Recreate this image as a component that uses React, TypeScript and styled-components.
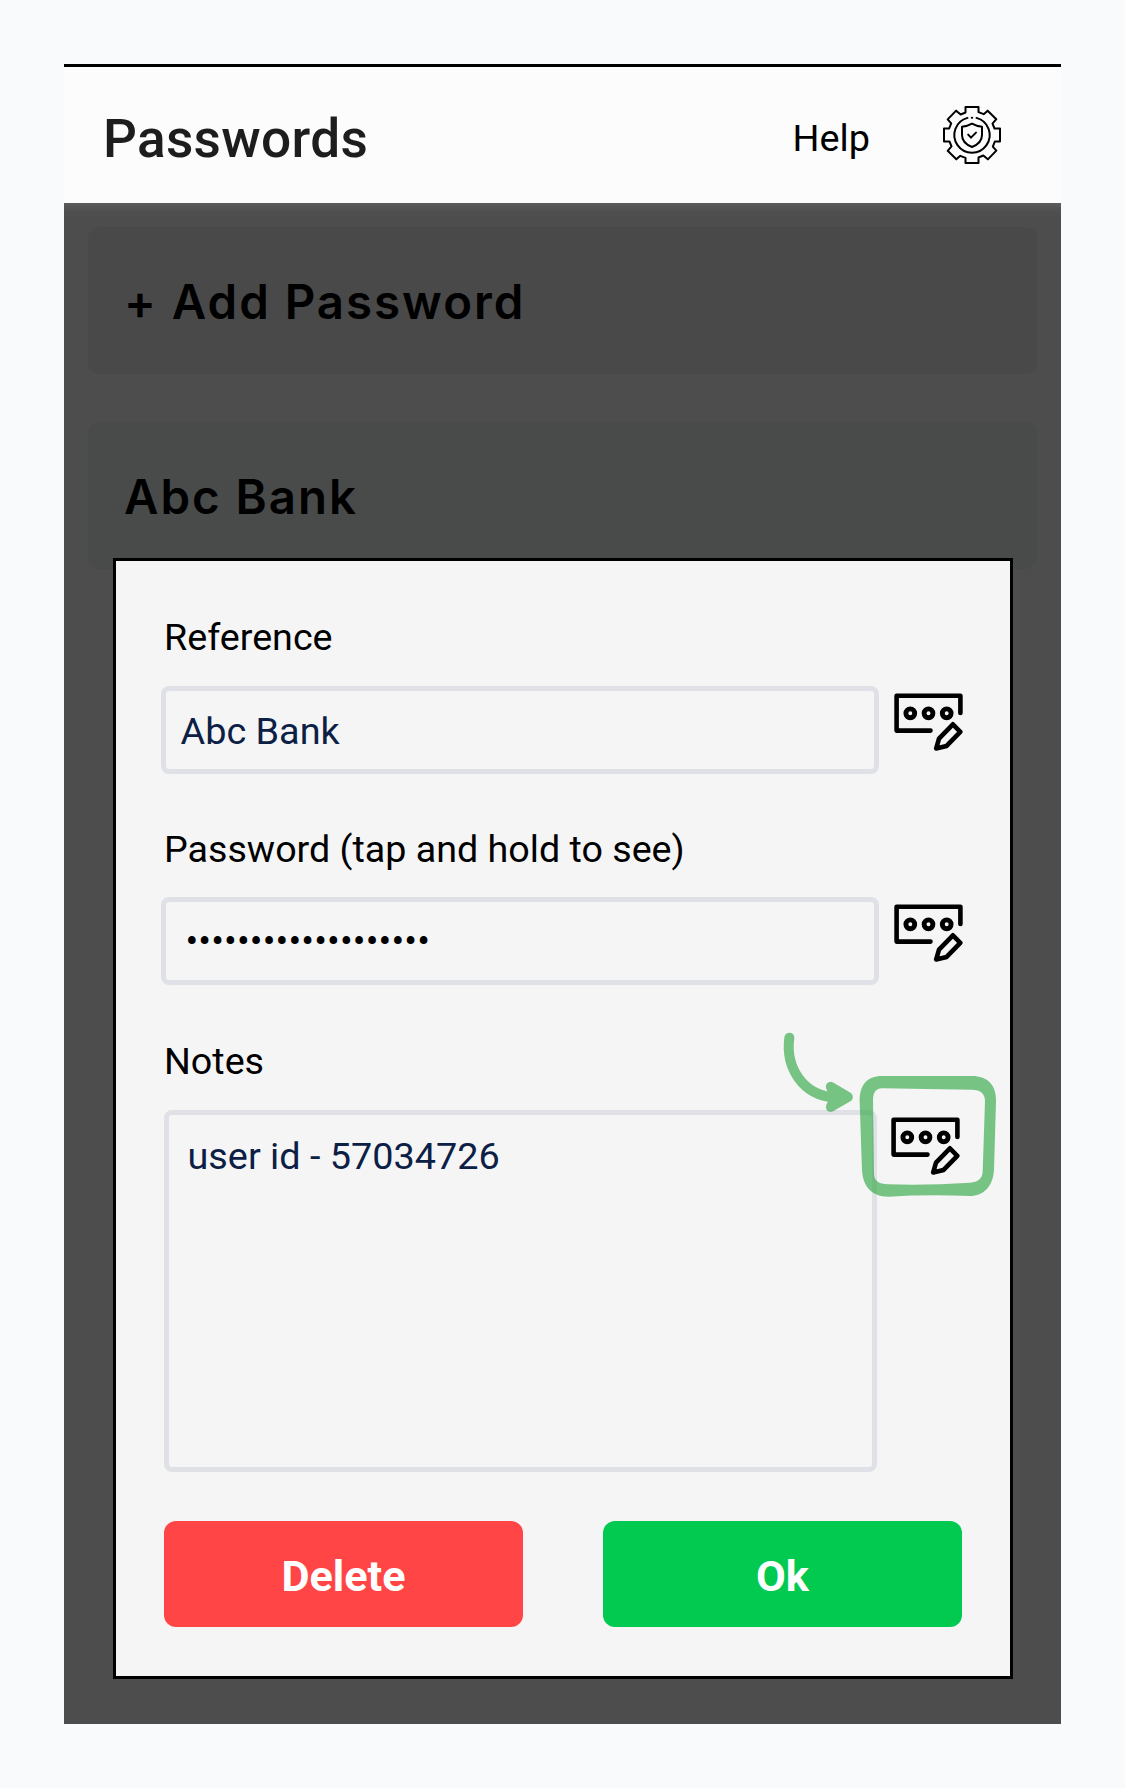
import React from "react";
import styled, { createGlobalStyle } from "styled-components";

const GlobalStyle = createGlobalStyle`
  *, *::before, *::after { box-sizing: border-box; }
  body {
    margin: 0;
    background: #f9fafc;
    font-family: Roboto, "Liberation Sans", sans-serif;
  }
`;

const Page = styled.main`
  height: 1788px;
  padding: 64px;
  overflow: hidden;
`;

const Screen = styled.div`
  position: relative;
  display: flex;
  flex-direction: column;
  width: 997px;
  height: 1660px;
  background: #4d4d4d;
`;

const Header = styled.header`
  display: flex;
  align-items: center;
  flex: none;
  height: 139px;
  padding: 0 60px 0 39px;
  border-top: 3px solid #000;
  background: #fcfcfc;
`;

const Title = styled.h1`
  margin: 7px auto 0 0;
  font-size: 53.2px;
  line-height: 62px;
  font-weight: 500;
  letter-spacing: 0.3px;
  color: #1d1d1d;
`;

const HelpLink = styled.span`
  margin: 6px 73px 0 0;
  font-size: 37.8px;
  line-height: 44px;
  color: #000;
`;

const GearSvg = styled.svg`
  width: 58px;
  height: 58px;
  margin-top: -1px;
  fill: none;
  stroke: #000;
  stroke-width: 6;
  stroke-linejoin: round;
  stroke-linecap: round;
`;

const List = styled.section`
  display: flex;
  flex-direction: column;
  gap: 48px;
  flex: 1;
  padding: 24px;
  background: linear-gradient(#5b5b5b, #4f4f4f 9px, #4d4d4d 16px);
`;

const Card = styled.div<{ $tint: string }>`
  display: flex;
  align-items: center;
  height: 147px;
  padding: 2px 36px 0;
  border-radius: 12px;
  background: ${(p) => p.$tint};
  color: #000;
  font-family: Inter, "Open Sans", sans-serif;
  font-size: 47.4px;
  font-weight: 600;
  letter-spacing: 2px;
`;

const Dialog = styled.section`
  position: absolute;
  left: 49px;
  top: 494px;
  display: flex;
  flex-direction: column;
  width: 900px;
  height: 1121px;
  padding: 54px 48px 48px 45px;
  border: 3px solid #000;
  background: #f5f5f5;
`;

const Field = styled.div<{ $labelGap: number; $after: number }>`
  display: flex;
  flex-direction: column;
  gap: ${(p) => p.$labelGap}px;
  margin-bottom: ${(p) => p.$after}px;
`;

const Label = styled.label`
  padding-left: 3px;
  font-size: 37.65px;
  line-height: 44px;
  color: #000;
`;

const FieldRow = styled.div<{ $gap: number }>`
  display: flex;
  align-items: flex-start;
  gap: ${(p) => p.$gap}px;
`;

const Box = styled.div`
  flex: none;
  border: 5px solid #e0e1e6;
  font-size: 37.8px;
  line-height: 44px;
  color: #0c2046;
`;

const TextBox = styled(Box)`
  display: flex;
  align-items: center;
  width: 718px;
  height: 88px;
  padding: 1px 14.5px 0;
  border-radius: 8px;
`;

const SecretBox = styled(TextBox)`
  padding: 0 0 1px 19.5px;
  color: #000;
  letter-spacing: 0.12px;
`;

const NotesBox = styled(Box)`
  width: 713px;
  height: 362px;
  margin-left: 3px;
  padding: 19px 18.5px;
  border-radius: 8px;
`;

const EditSvg = styled.svg`
  flex: none;
  width: 69px;
  height: 58px;
  margin-top: 7px;
  fill: none;
  stroke: #000;
  stroke-width: 4.6;
  stroke-linejoin: round;
  stroke-linecap: round;
`;

const Actions = styled.div`
  display: flex;
  justify-content: space-between;
  padding-left: 3px;
`;

const Action = styled.button<{ $color: string }>`
  width: 359px;
  height: 106px;
  padding: 4px 0 0;
  border: 0;
  border-radius: 12px;
  background: ${(p) => p.$color};
  color: #fff;
  font-family: inherit;
  font-size: 43.2px;
  font-weight: 700;
`;

const Annotation = styled.svg`
  position: absolute;
  left: 696px;
  top: 946px;
  width: 260px;
  height: 200px;
  pointer-events: none;
`;

const gearQuarter = [
  [19.5, -84], [19.5, -68.5], [35, -62.5], [47, -73], [73, -47.5],
  [61.5, -34], [67.5, -19.5], [84, -19.5],
];
const gearPoints = [0, 1, 2, 3]
  .flatMap((turn) =>
    gearQuarter.map(([x, y]) => {
      let p = [x, y];
      for (let i = 0; i < turn; i++) p = [-p[1], p[0]];
      return p.join(",");
    }),
  )
  .join(" ");

const GearIcon = () => (
  <GearSvg viewBox="-87 -87 174 174">
    <polygon points={gearPoints} />
    <path d="M13.5 -51.3 A53 53 0 1 1 -13.5 -51.3" />
    <path d="M-0.6 -52 H0.6" />
    <path d="M0 -34 Q14 -26 30 -25 V0 C30 18 18 29 0 36 C-18 29 -30 18 -30 0 V-25 Q-14 -26 0 -34 Z" />
    <path d="M-11.5 -1 L-3 8 L12 -7" />
  </GearSvg>
);

const EditIcon = () => (
  <EditSvg viewBox="0 -0.3 69 58">
    <path d="M66.4 19.7 V2.4 H2.6 V37.3 H36.5" />
    <g strokeWidth="4.9">
      <circle cx="16.3" cy="20" r="4.4" />
      <circle cx="34.5" cy="20" r="4.4" />
      <circle cx="52.7" cy="20" r="4.4" />
    </g>
    <path d="M58.9 31 L66.3 38.5 L52.6 52.6 L42.2 55.2 L45 45.4 Z" />
  </EditSvg>
);

export default function App() {
  return (
    <>
      <GlobalStyle />
      <Page>
        <Screen>
          <Header>
            <Title>Passwords</Title>
            <HelpLink>Help</HelpLink>
            <GearIcon />
          </Header>
          <List>
            <Card $tint="#494949">+ Add Password</Card>
            <Card $tint="#494b4a">Abc Bank</Card>
          </List>
          <Dialog>
            <Field $labelGap={27} $after={53}>
              <Label>Reference</Label>
              <FieldRow $gap={15}>
                <TextBox>Abc Bank</TextBox>
                <EditIcon />
              </FieldRow>
            </Field>
            <Field $labelGap={26} $after={54}>
              <Label>Password (tap and hold to see)</Label>
              <FieldRow $gap={15}>
                <SecretBox>{"•".repeat(19)}</SecretBox>
                <EditIcon />
              </FieldRow>
            </Field>
            <Field $labelGap={27} $after={49}>
              <Label>Notes</Label>
              <FieldRow $gap={14}>
                <NotesBox>user id - 57034726</NotesBox>
                <EditIcon />
              </FieldRow>
            </Field>
            <Actions>
              <Action $color="#ff4545">Delete</Action>
              <Action $color="#02ca50">Ok</Action>
            </Actions>
          </Dialog>
          <Annotation viewBox="0 0 780 600">
            <g opacity="0.6" fill="#23a23a" stroke="none">
              <path
                fillRule="evenodd"
                d="M365 198 H635 C685 198 709 227 708 272 L702 480 C699 530 670 558 630 558 Q500 553 385 560 C335 560 309 530 306 480 L299 275 C298 225 322 198 365 198 Z
                   M370 235 C350 233 340 245 339 268 L342 490 C342 513 355 522 385 523 Q500 527 630 518 C655 516 667 505 668 485 L675 275 C675 250 663 240 635 239 Q500 238 370 235 Z"
              />
              <path
                d="M88 83 C76 175 130 256 222 262"
                fill="none"
                stroke="#23a23a"
                strokeWidth="30"
                strokeLinecap="round"
              />
              <path
                d="M212 230 L264 261 L212 291 L226 261 Z"
                stroke="#23a23a"
                strokeWidth="29"
                strokeLinecap="round"
                strokeLinejoin="round"
              />
            </g>
          </Annotation>
        </Screen>
      </Page>
    </>
  );
}
